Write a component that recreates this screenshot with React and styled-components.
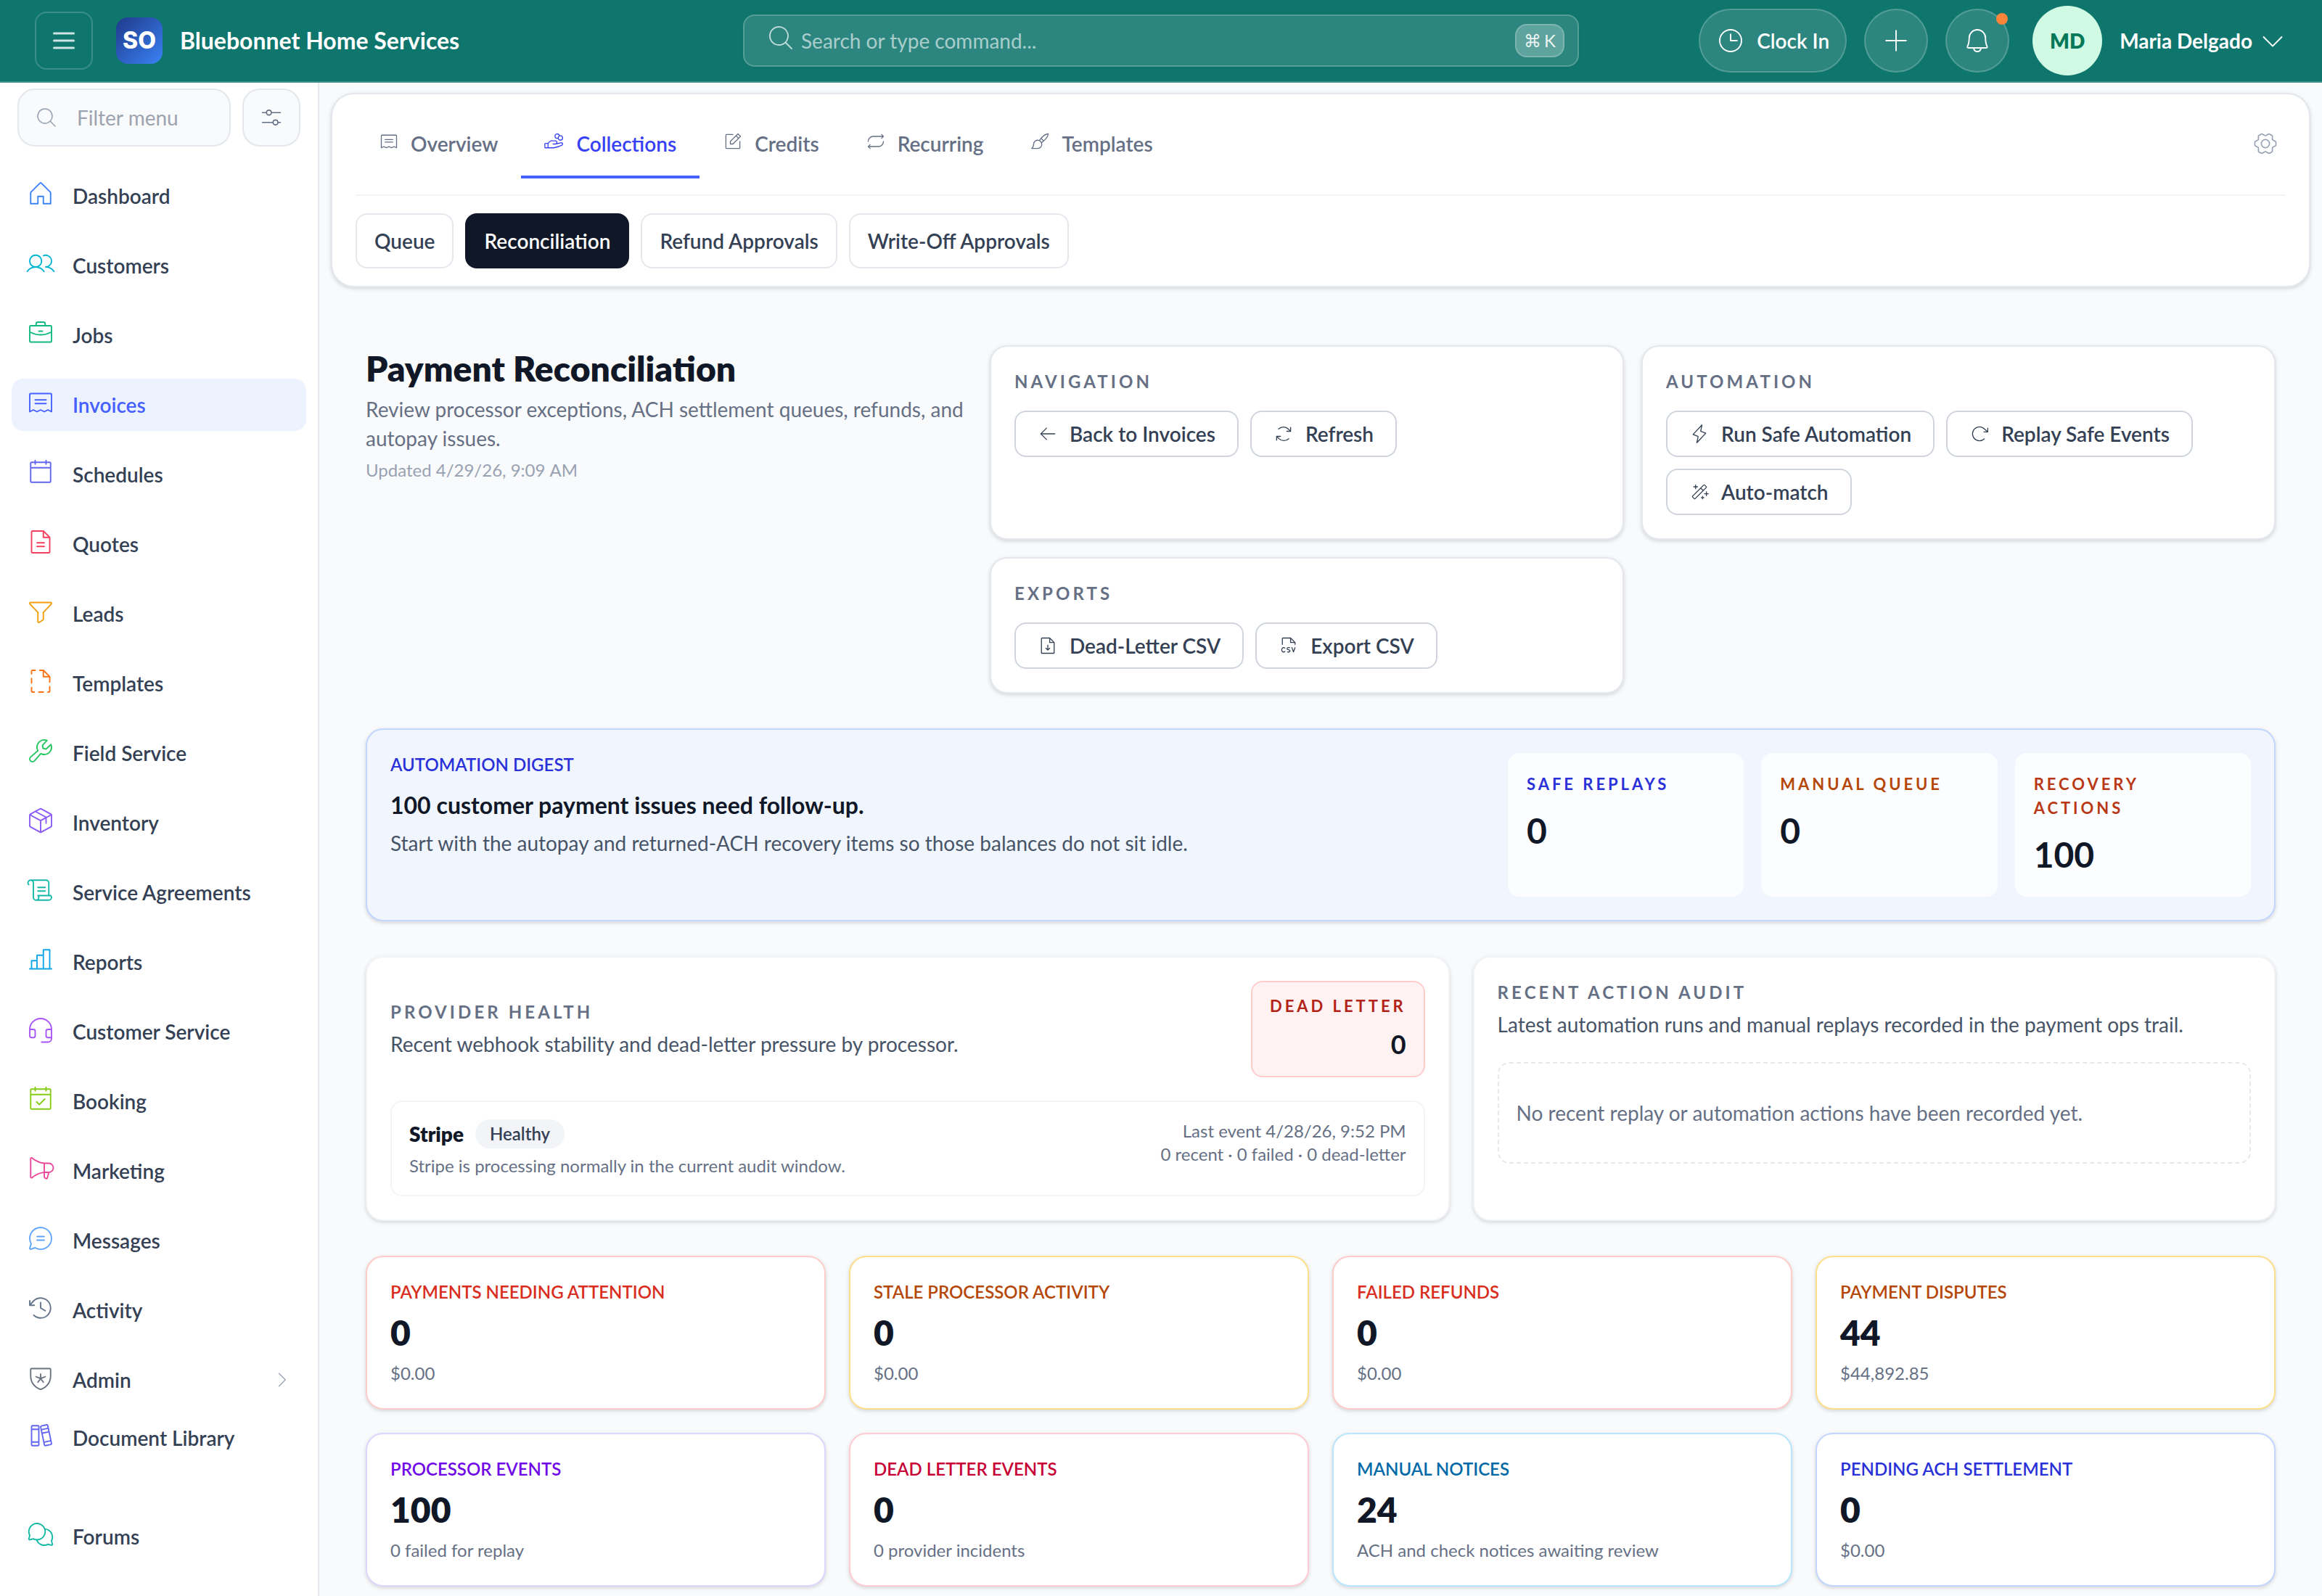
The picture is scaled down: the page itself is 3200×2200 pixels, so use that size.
import React from "react";
import styled, { createGlobalStyle } from "styled-components";
import {
  PiArrowClockwiseLight,
  PiArrowLeftLight,
  PiArrowsClockwiseLight,
  PiBellLight,
  PiBooksLight,
  PiBriefcaseLight,
  PiCalendarBlankLight,
  PiCalendarCheckLight,
  PiCaretDownLight,
  PiCaretRightLight,
  PiChartBarLight,
  PiChatCircleTextLight,
  PiChatsCircleLight,
  PiClockCounterClockwiseLight,
  PiClockLight,
  PiFileArrowDownLight,
  PiFileCsvLight,
  PiFileDashedLight,
  PiFileTextLight,
  PiFunnelLight,
  PiGearSixLight,
  PiHandCoinsLight,
  PiHeadsetLight,
  PiHouseLight,
  PiLightningLight,
  PiMagicWandLight,
  PiMagnifyingGlassLight,
  PiMegaphoneLight,
  PiNotePencilLight,
  PiPackageLight,
  PiPaintBrushLight,
  PiPlusLight,
  PiReceiptLight,
  PiRepeatLight,
  PiScrollLight,
  PiShieldStarLight,
  PiSlidersHorizontalLight,
  PiUsersLight,
  PiWrenchLight,
} from "react-icons/pi";

const color = {
  ink: "#101828",
  slate: "#344054",
  body: "#475467",
  muted: "#667085",
  faint: "#98a2b3",
  line: "#e4e7ec",
  lineStrong: "#d0d5dd",
  lineSoft: "#f2f4f7",
  page: "#f9fafb",
  brand: "#465fff",
  brandDeep: "#2a31d8",
  brandTint: "#ecf3ff",
  teal: "#0f766e",
  red: "#b42318",
};

const cardShadow = "0 2px 6px rgba(16, 24, 40, 0.1), 0 2px 4px rgba(16, 24, 40, 0.06)";

const GlobalStyle = createGlobalStyle`
  *, *::before, *::after { box-sizing: border-box; }
  body {
    margin: 0;
    background: ${color.page};
    color: ${color.ink};
    font-family: Lato, "Noto Sans", sans-serif;
    font-size: 28px;
    line-height: 40px;
  }
  h1, h2, h3, p, ul { margin: 0; padding: 0; }
  ul { list-style: none; }
  a { color: inherit; text-decoration: none; }
  button, input { font: inherit; color: inherit; margin: 0; }
  button { cursor: pointer; }
  svg { display: block; flex: none; }
`;

/* ---------- Top bar ---------- */

const TopBar = styled.header`
  display: grid;
  grid-template-columns: 1fr minmax(0, 1152px) 1fr;
  align-items: center;
  height: 114px;
  padding: 0 48px;
  background: ${color.teal};
  border-bottom: 2px solid rgba(255, 255, 255, 0.2);
  color: #fff;
`;

const Brand = styled.div`
  display: flex;
  align-items: center;
`;

const MenuButton = styled.button`
  display: grid;
  place-items: center;
  width: 80px;
  height: 80px;
  margin-right: 32px;
  padding: 0;
  background: none;
  border: 2px solid rgba(255, 255, 255, 0.18);
  border-radius: 16px;
  color: rgba(255, 255, 255, 0.8);
`;

const Logo = styled.span`
  display: grid;
  place-items: center;
  width: 64px;
  height: 64px;
  margin-right: 24px;
  border-radius: 16px;
  background: linear-gradient(135deg, #1e3a8a, #3b82f6);
  font-family: Inter, "Liberation Sans", sans-serif;
  font-size: 32px;
  font-weight: 800;
`;

const CompanyName = styled.span`
  font-size: 32px;
  font-weight: 700;
  white-space: nowrap;
`;

const SearchBox = styled.label`
  display: flex;
  align-items: center;
  gap: 8px;
  height: 72px;
  padding: 0 18px 0 30px;
  background: rgba(255, 255, 255, 0.12);
  border: 2px solid rgba(255, 255, 255, 0.2);
  border-radius: 16px;
  box-shadow: 0 2px 4px rgba(16, 24, 40, 0.05);
  color: rgba(255, 255, 255, 0.7);
`;

const SearchIcon = styled.span`
  padding-bottom: 8px;
`;

const SearchInput = styled.input`
  flex: 1;
  min-width: 0;
  padding: 0;
  background: none;
  border: 0;
  outline: 0;
  &::placeholder {
    color: rgba(255, 255, 255, 0.6);
    opacity: 1;
  }
`;

const Shortcut = styled.kbd`
  display: flex;
  align-items: center;
  gap: 4px;
  height: 46px;
  padding: 0 10px;
  background: rgba(255, 255, 255, 0.24);
  border: 2px solid rgba(255, 255, 255, 0.2);
  border-radius: 16px;
  font-family: Lato, "DejaVu Sans", sans-serif;
  font-size: 24px;
  color: rgba(255, 255, 255, 0.9);
`;

const Actions = styled.div`
  display: flex;
  justify-content: flex-end;
  align-items: center;
  gap: 24px;
`;

const PillButton = styled.button`
  position: relative;
  display: flex;
  align-items: center;
  justify-content: center;
  gap: 16px;
  min-width: 88px;
  height: 88px;
  padding: 0 22px;
  background: rgba(255, 255, 255, 0.12);
  border: 2px solid rgba(255, 255, 255, 0.18);
  border-radius: 44px;
  font-weight: 600;
  white-space: nowrap;
`;

const AlertDot = styled.span`
  position: absolute;
  top: 4px;
  right: 0;
  width: 16px;
  height: 16px;
  border-radius: 50%;
  background: #fd853a;
`;

const UserButton = styled.button`
  display: flex;
  align-items: center;
  gap: 8px;
  margin-left: 8px;
  padding: 0;
  background: none;
  border: 0;
  font-weight: 700;
  white-space: nowrap;
`;

const Avatar = styled.span`
  display: grid;
  place-items: center;
  width: 96px;
  height: 96px;
  margin-right: 16px;
  border-radius: 50%;
  background: #d1fae5;
  color: #047857;
  font-weight: 800;
`;

/* ---------- Side bar ---------- */

const Shell = styled.div`
  display: flex;
  min-height: calc(100vh - 114px);
`;

const SideBar = styled.aside`
  flex: none;
  width: 440px;
  padding: 8px 16px 46px;
  background: #fff;
  border-right: 2px solid ${color.line};
`;

const FilterRow = styled.div`
  display: flex;
  gap: 16px;
  margin: 0 8px 32px;
`;

const FilterBox = styled.label`
  display: flex;
  flex: 1;
  align-items: center;
  gap: 26px;
  min-width: 0;
  height: 80px;
  padding: 0 22px;
  background: ${color.page};
  border: 2px solid ${color.line};
  border-radius: 24px;
  color: ${color.faint};
`;

const FilterInput = styled.input`
  flex: 1;
  min-width: 0;
  width: 0;
  padding: 0;
  background: none;
  border: 0;
  outline: 0;
  &::placeholder {
    color: #9ca3af;
    opacity: 1;
  }
`;

const FilterButton = styled.button`
  display: grid;
  place-items: center;
  width: 80px;
  height: 80px;
  padding: 0;
  background: ${color.page};
  border: 2px solid ${color.line};
  border-radius: 24px;
  color: ${color.muted};
`;

const Menu = styled.ul`
  display: flex;
  flex-direction: column;
  gap: ${(p) => p.$gap || 24}px;
  & + & {
    margin-top: 64px;
  }
`;

const AdminGroup = styled.div`
  margin-top: 24px;
`;

const MenuLink = styled.a`
  display: flex;
  align-items: center;
  gap: 24px;
  height: 72px;
  padding: 0 20px;
  border-radius: 16px;
  background: ${(p) => (p.$active ? color.brandTint : "transparent")};
  color: ${(p) => (p.$active ? color.brand : color.slate)};
  font-weight: 600;
  white-space: nowrap;
`;

const MenuIcon = styled.span`
  padding-bottom: 6px;
  color: ${(p) => p.$tint};
`;

const MenuCaret = styled.span`
  margin-left: auto;
  color: ${color.faint};
`;

/* ---------- Main area ---------- */

const Main = styled.main`
  flex: 1;
  min-width: 0;
  padding: 14px 16px 0;
`;

const NavCard = styled.section`
  padding: 20px 32px 24px;
  background: #fff;
  border: 2px solid ${color.line};
  border-radius: 32px;
  box-shadow: ${cardShadow};
`;

const TabRow = styled.nav`
  display: flex;
  padding-bottom: 22px;
  margin-bottom: 24px;
  border-bottom: 2px solid ${color.lineSoft};
`;

const Tab = styled.a`
  display: flex;
  align-items: center;
  gap: 16px;
  height: 96px;
  padding: 0 32px;
  border: solid transparent;
  border-width: 4px 0;
  border-bottom-color: ${(p) => (p.$active ? color.brand : "transparent")};
  color: ${(p) => (p.$active ? "#3641f5" : color.muted)};
  font-weight: 600;
`;

const TabIcon = styled.span`
  padding-bottom: 6px;
`;

const SettingsButton = styled.button`
  margin: 0 10px 0 auto;
  padding: 0;
  background: none;
  border: 0;
  color: ${color.faint};
`;

const ChipRow = styled.div`
  display: flex;
  flex-wrap: wrap;
  gap: 16px;
`;

const Chip = styled.button`
  height: 76px;
  padding: 0 24px;
  background: ${(p) => (p.$active ? color.ink : "#fff")};
  border: 2px solid ${(p) => (p.$active ? color.ink : color.line)};
  border-radius: 16px;
  color: ${(p) => (p.$active ? "#fff" : color.slate)};
  font-weight: 600;
`;

const Content = styled.div`
  display: flex;
  flex-direction: column;
  gap: 48px;
  padding: 80px 48px 12px;
`;

const Intro = styled.section`
  display: grid;
  grid-template-columns: 836fr 1772fr;
  gap: 24px;
`;

const PageTitle = styled.h1`
  font-size: 48px;
  font-weight: 800;
  line-height: 64px;
`;

const Lead = styled.p`
  margin-top: 4px;
  color: ${color.muted};
`;

const Updated = styled.p`
  margin-top: 8px;
  font-size: 24px;
  line-height: 32px;
  color: ${color.faint};
`;

const ActionGrid = styled.div`
  display: grid;
  grid-template-columns: 1fr 1fr;
  gap: 24px;
`;

const Card = styled.section`
  padding: 32px;
  background: #fff;
  border: 2px solid ${(p) => p.$edge || color.line};
  border-radius: 24px;
  box-shadow: ${cardShadow};
`;

const Eyebrow = styled.h2`
  font-size: 24px;
  font-weight: 700;
  line-height: 32px;
  letter-spacing: 0.17em;
  text-transform: uppercase;
  color: ${color.muted};
`;

const ButtonRow = styled.div`
  display: flex;
  flex-wrap: wrap;
  gap: 16px;
  margin-top: 24px;
`;

const OutlineButton = styled.button`
  display: flex;
  align-items: center;
  gap: 16px;
  height: 64px;
  padding: 0 30px;
  background: #fff;
  border: 2px solid ${color.lineStrong};
  border-radius: 16px;
  color: ${color.slate};
  font-weight: 600;
  white-space: nowrap;
`;

const Digest = styled(Card)`
  display: grid;
  grid-template-columns: 1fr minmax(0, 1024px);
  gap: 32px;
  background: #f1f6fe;
`;

const Caption = styled.h2`
  font-size: 24px;
  font-weight: 600;
  line-height: 32px;
  text-transform: uppercase;
  color: ${(p) => p.$tone};
`;

const DigestHeadline = styled.p`
  margin-top: 16px;
  font-size: 32px;
  font-weight: 700;
  line-height: 48px;
`;

const Copy = styled.p`
  margin-top: 8px;
  color: ${color.body};
`;

const Tiles = styled.div`
  display: grid;
  grid-template-columns: repeat(3, 1fr);
  gap: 24px;
`;

const Tile = styled.div`
  padding: 26px;
  background: rgba(255, 255, 255, 0.8);
  border-radius: 16px;
`;

const TileLabel = styled.h3`
  font-size: 22px;
  font-weight: 700;
  line-height: 33px;
  letter-spacing: 0.18em;
  text-transform: uppercase;
  color: ${(p) => p.$tone};
`;

const TileValue = styled.p`
  margin-top: 16px;
  font-size: 48px;
  font-weight: 700;
  line-height: 64px;
`;

const HealthGrid = styled.div`
  display: grid;
  grid-template-columns: 1.35fr 1fr;
  gap: 32px;
`;

const HealthHeader = styled.div`
  display: flex;
  align-items: center;
  justify-content: space-between;
`;

const DeadLetter = styled.div`
  padding: 16px 24px;
  background: #fef3f2;
  border: 2px solid #fecdca;
  border-radius: 16px;
  text-align: right;
`;

const DeadLetterValue = styled.p`
  margin-top: 8px;
  font-size: 36px;
  font-weight: 700;
  line-height: 56px;
`;

const ProviderRow = styled.div`
  display: flex;
  justify-content: space-between;
  margin-top: 32px;
  padding: 24px;
  border: 2px solid ${color.lineSoft};
  border-radius: 16px;
`;

const ProviderName = styled.h3`
  display: flex;
  align-items: center;
  gap: 16px;
  font-size: 28px;
  font-weight: 800;
`;

const Badge = styled.span`
  height: 40px;
  padding: 0 20px;
  background: ${color.lineSoft};
  border-radius: 20px;
  color: ${color.slate};
  font-size: 24px;
  font-weight: 600;
`;

const Small = styled.p`
  margin-top: ${(p) => (p.$spaced ? 8 : 0)}px;
  font-size: 24px;
  line-height: 32px;
  color: ${color.muted};
`;

const ProviderStats = styled.div`
  text-align: right;
`;

const EmptyNote = styled.p`
  margin-top: 32px;
  padding: 48px 24px;
  border: 2px dashed ${color.line};
  border-radius: 16px;
  color: ${color.muted};
`;

const Metrics = styled.div`
  display: grid;
  grid-template-columns: repeat(4, 1fr);
  gap: 32px;
`;

const MetricValue = styled.p`
  margin-top: 8px;
  font-size: 48px;
  font-weight: 800;
  line-height: 64px;
`;

/* ---------- Data ---------- */

const menuItems = [
  { label: "Dashboard", Icon: PiHouseLight, tint: "#3b82f6" },
  { label: "Customers", Icon: PiUsersLight, tint: "#06b6d4" },
  { label: "Jobs", Icon: PiBriefcaseLight, tint: "#10b981" },
  { label: "Invoices", Icon: PiReceiptLight, tint: "#465fff", active: true },
  { label: "Schedules", Icon: PiCalendarBlankLight, tint: "#6366f1" },
  { label: "Quotes", Icon: PiFileTextLight, tint: "#f43f5e" },
  { label: "Leads", Icon: PiFunnelLight, tint: "#f59e0b" },
  { label: "Templates", Icon: PiFileDashedLight, tint: "#f97316" },
  { label: "Field Service", Icon: PiWrenchLight, tint: "#22c55e" },
  { label: "Inventory", Icon: PiPackageLight, tint: "#8b5cf6" },
  { label: "Service Agreements", Icon: PiScrollLight, tint: "#14b8a6" },
  { label: "Reports", Icon: PiChartBarLight, tint: "#0ea5e9" },
  { label: "Customer Service", Icon: PiHeadsetLight, tint: "#a855f7" },
  { label: "Booking", Icon: PiCalendarCheckLight, tint: "#84cc16" },
  { label: "Marketing", Icon: PiMegaphoneLight, tint: "#ec4899" },
  { label: "Messages", Icon: PiChatCircleTextLight, tint: "#60a5fa" },
  { label: "Activity", Icon: PiClockCounterClockwiseLight, tint: "#64748b" },
];

const adminItems = [
  { label: "Admin", Icon: PiShieldStarLight, tint: "#6b7280", expandable: true },
  { label: "Document Library", Icon: PiBooksLight, tint: "#6366f1" },
];

const forumItems = [{ label: "Forums", Icon: PiChatsCircleLight, tint: "#14b8a6" }];

const tabs = [
  { label: "Overview", Icon: PiReceiptLight },
  { label: "Collections", Icon: PiHandCoinsLight, active: true },
  { label: "Credits", Icon: PiNotePencilLight },
  { label: "Recurring", Icon: PiRepeatLight },
  { label: "Templates", Icon: PiPaintBrushLight },
];

const chips = ["Queue", "Reconciliation", "Refund Approvals", "Write-Off Approvals"];

const actionCards = [
  {
    title: "Navigation",
    actions: [
      { label: "Back to Invoices", Icon: PiArrowLeftLight },
      { label: "Refresh", Icon: PiArrowsClockwiseLight },
    ],
  },
  {
    title: "Automation",
    actions: [
      { label: "Run Safe Automation", Icon: PiLightningLight },
      { label: "Replay Safe Events", Icon: PiArrowClockwiseLight },
      { label: "Auto-match", Icon: PiMagicWandLight },
    ],
  },
  {
    title: "Exports",
    actions: [
      { label: "Dead-Letter CSV", Icon: PiFileArrowDownLight },
      { label: "Export CSV", Icon: PiFileCsvLight },
    ],
  },
];

const tiles = [
  { label: "Safe replays", value: "0", tone: "#2a31d8" },
  { label: "Manual queue", value: "0", tone: "#b54708" },
  { label: "Recovery actions", value: "100", tone: "#b93815" },
];

const metrics = [
  { label: "Payments needing attention", value: "0", note: "$0.00", tone: "#d92d20", edge: "#fecdca" },
  { label: "Stale processor activity", value: "0", note: "$0.00", tone: "#b54708", edge: "#fedf89" },
  { label: "Failed refunds", value: "0", note: "$0.00", tone: "#d92d20", edge: "#fecdca" },
  { label: "Payment disputes", value: "44", note: "$44,892.85", tone: "#b54708", edge: "#fedf89" },
  { label: "Processor events", value: "100", note: "0 failed for replay", tone: "#7008e7", edge: "#ddd6ff" },
  { label: "Dead letter events", value: "0", note: "0 provider incidents", tone: "#c70036", edge: "#ffccd3" },
  { label: "Manual notices", value: "24", note: "ACH and check notices awaiting review", tone: "#0069a8", edge: "#b8e6fe" },
  { label: "Pending ACH settlement", value: "0", note: "$0.00", tone: "#2a31d8", edge: "#c2d6ff" },
];

/* ---------- Parts ---------- */

function MenuGroup({ items, gap }) {
  return (
    <Menu $gap={gap}>
      {items.map(({ label, Icon, tint, active, expandable }) => (
        <li key={label}>
          <MenuLink href="#" $active={active} aria-current={active ? "page" : undefined}>
            <MenuIcon $tint={tint}>
              <Icon size={40} />
            </MenuIcon>
            {label}
            {expandable && (
              <MenuCaret>
                <PiCaretRightLight size={28} />
              </MenuCaret>
            )}
          </MenuLink>
        </li>
      ))}
    </Menu>
  );
}

function Header() {
  return (
    <TopBar>
      <Brand>
        <MenuButton aria-label="Toggle menu">
          <svg width="32" height="24" viewBox="0 0 32 24" fill="none" stroke="currentColor" strokeWidth="3" strokeLinecap="round">
            <path d="M2.5 2h27M2.5 12h27M2.5 22h27" />
          </svg>
        </MenuButton>
        <Logo>SO</Logo>
        <CompanyName>Bluebonnet Home Services</CompanyName>
      </Brand>
      <SearchBox>
        <SearchIcon>
          <PiMagnifyingGlassLight size={40} />
        </SearchIcon>
        <SearchInput type="text" placeholder="Search or type command..." aria-label="Search or type command" />
        <Shortcut>
          <span>⌘</span>
          <span>K</span>
        </Shortcut>
      </SearchBox>
      <Actions>
        <PillButton>
          <PiClockLight size={40} />
          Clock In
        </PillButton>
        <PillButton aria-label="Create">
          <PiPlusLight size={40} />
        </PillButton>
        <PillButton aria-label="Notifications">
          <PiBellLight size={40} />
          <AlertDot />
        </PillButton>
        <UserButton>
          <Avatar>MD</Avatar>
          Maria Delgado
          <PiCaretDownLight size={40} />
        </UserButton>
      </Actions>
    </TopBar>
  );
}

export default function App() {
  return (
    <>
      <GlobalStyle />
      <Header />
      <Shell>
        <SideBar>
          <FilterRow>
            <FilterBox>
              <PiMagnifyingGlassLight size={32} />
              <FilterInput type="text" placeholder="Filter menu" aria-label="Filter menu" />
            </FilterBox>
            <FilterButton aria-label="Menu options">
              <PiSlidersHorizontalLight size={36} />
            </FilterButton>
          </FilterRow>
          <nav>
            <MenuGroup items={menuItems} />
            <AdminGroup>
              <MenuGroup items={adminItems} gap={8} />
              <MenuGroup items={forumItems} />
            </AdminGroup>
          </nav>
        </SideBar>
        <Main>
          <NavCard>
            <TabRow>
              {tabs.map(({ label, Icon, active }) => (
                <Tab key={label} href="#" $active={active}>
                  <TabIcon>
                    <Icon size={28} />
                  </TabIcon>
                  {label}
                </Tab>
              ))}
              <SettingsButton aria-label="Settings">
                <PiGearSixLight size={36} />
              </SettingsButton>
            </TabRow>
            <ChipRow>
              {chips.map((label) => (
                <Chip key={label} $active={label === "Reconciliation"}>
                  {label}
                </Chip>
              ))}
            </ChipRow>
          </NavCard>
          <Content>
            <Intro>
              <div>
                <PageTitle>Payment Reconciliation</PageTitle>
                <Lead>Review processor exceptions, ACH settlement queues, refunds, and autopay issues.</Lead>
                <Updated>Updated 4/29/26, 9:09{"\u202f"}AM</Updated>
              </div>
              <ActionGrid>
                {actionCards.map(({ title, actions }) => (
                  <Card key={title}>
                    <Eyebrow>{title}</Eyebrow>
                    <ButtonRow>
                      {actions.map(({ label, Icon }) => (
                        <OutlineButton key={label}>
                          <Icon size={28} />
                          {label}
                        </OutlineButton>
                      ))}
                    </ButtonRow>
                  </Card>
                ))}
              </ActionGrid>
            </Intro>
            <Digest $edge="#c2d6ff">
              <div>
                <Caption $tone={color.brandDeep}>Automation digest</Caption>
                <DigestHeadline>100 customer payment issues need follow-up.</DigestHeadline>
                <Copy>Start with the autopay and returned-ACH recovery items so those balances do not sit idle.</Copy>
              </div>
              <Tiles>
                {tiles.map(({ label, value, tone }) => (
                  <Tile key={label}>
                    <TileLabel $tone={tone}>{label}</TileLabel>
                    <TileValue>{value}</TileValue>
                  </Tile>
                ))}
              </Tiles>
            </Digest>
            <HealthGrid>
              <Card $edge={color.lineSoft}>
                <HealthHeader>
                  <div>
                    <Eyebrow>Provider health</Eyebrow>
                    <Copy>Recent webhook stability and dead-letter pressure by processor.</Copy>
                  </div>
                  <DeadLetter>
                    <TileLabel $tone={color.red}>Dead letter</TileLabel>
                    <DeadLetterValue>0</DeadLetterValue>
                  </DeadLetter>
                </HealthHeader>
                <ProviderRow>
                  <div>
                    <ProviderName>
                      Stripe
                      <Badge>Healthy</Badge>
                    </ProviderName>
                    <Small $spaced>Stripe is processing normally in the current audit window.</Small>
                  </div>
                  <ProviderStats>
                    <Small>Last event 4/28/26, 9:52{"\u202f"}PM</Small>
                    <Small>0 recent · 0 failed · 0 dead-letter</Small>
                  </ProviderStats>
                </ProviderRow>
              </Card>
              <Card $edge={color.lineSoft}>
                <Eyebrow>Recent action audit</Eyebrow>
                <Copy>Latest automation runs and manual replays recorded in the payment ops trail.</Copy>
                <EmptyNote>No recent replay or automation actions have been recorded yet.</EmptyNote>
              </Card>
            </HealthGrid>
            <Metrics>
              {metrics.map(({ label, value, note, tone, edge }) => (
                <Card key={label} $edge={edge}>
                  <Caption $tone={tone}>{label}</Caption>
                  <MetricValue>{value}</MetricValue>
                  <Small $spaced>{note}</Small>
                </Card>
              ))}
            </Metrics>
          </Content>
        </Main>
      </Shell>
    </>
  );
}
